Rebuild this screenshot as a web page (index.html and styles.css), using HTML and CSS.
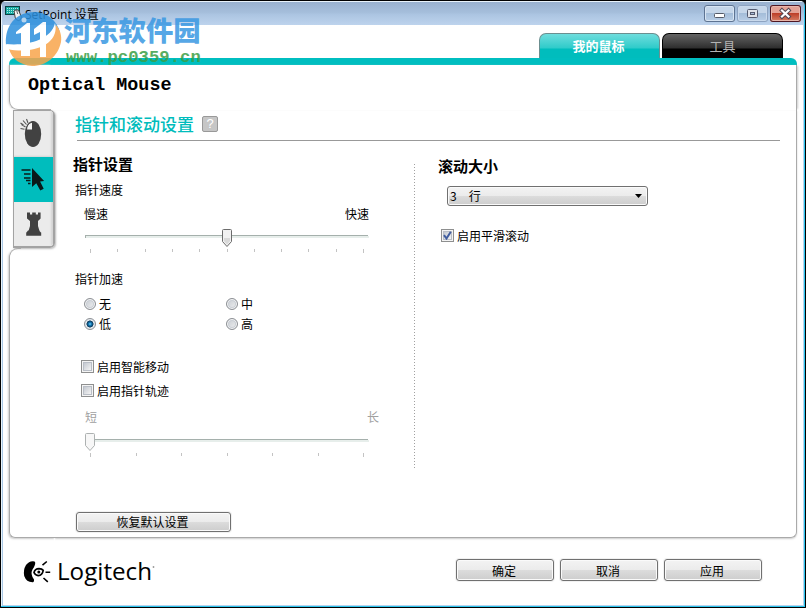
FILE: index.html
```html
<!DOCTYPE html>
<html lang="zh-CN">
<head>
<meta charset="utf-8">
<title>SetPoint 设置</title>
<link rel="stylesheet" href="styles.css">
</head>
<body>
<div class="window">
  <header class="titlebar">
    <svg class="app-icon" width="18" height="17" viewBox="0 0 18 17">
      <rect x="0.5" y="1.5" width="14" height="8" fill="#16aaa3" stroke="#0d3f42"/>
      <path d="M2 3.5h11M2 5.5h11M2 7.5h8" stroke="#a8f0e6" stroke-dasharray="1 1"/>
      <path d="M9 6q3-3 5 0l2.300 6q0 3-2.500 3.500q-2.800 0-3.500-2.500z" fill="#f2f2f2" stroke="#444"/>
      <path d="M11.500 5l1.200 4" stroke="#666"/>
    </svg>
    <span class="caption">SetPoint 设置</span>
    <div class="window-buttons">
      <span class="wbtn"><svg width="31" height="17" viewBox="0 0 31 17"><rect x="10.500" y="8.500" width="10" height="4" rx="1" fill="#fff" stroke="#555b68"/></svg></span>
      <span class="wbtn dim"><svg width="31" height="17" viewBox="0 0 31 17"><rect x="10.500" y="4.500" width="10" height="8" rx="1" fill="#dfe3ea" stroke="#555b70"/><rect x="13.500" y="7.500" width="4" height="2" fill="#a9bdd8" stroke="#555b70"/></svg></span>
      <span class="wbtn close"><svg width="31" height="17" viewBox="0 0 31 17"><path d="M12 5.500l6.500 6M18.500 5.500l-6.500 6" stroke="#524550" stroke-width="4.200" stroke-linecap="square"/><path d="M12 5.500l6.500 6M18.500 5.500l-6.500 6" stroke="#fff" stroke-width="2.200" stroke-linecap="square"/></svg></span>
    </div>
  </header>

  <nav class="tabs">
    <span class="tab active">我的鼠标</span>
    <span class="tab">工具</span>
  </nav>

  <main class="panel">
    <div class="accent"></div>
    <div class="device"><div class="device-edge"><h1>Optical Mouse</h1></div></div>
    <div class="panel-body">
      <aside class="rail">
        <div class="rail-tabs">
          <span class="rail-tab first"><svg width="40" height="46" viewBox="0 0 40 46">
            <ellipse cx="19" cy="23" rx="8.200" ry="13" fill="#424242"/>
            <path d="M12.500 19q0-6.500 6-8v8z" fill="#f4f4f4" stroke="#424242"/>
            <path d="M6.500 17.500l4 .8M7.500 13.500l4 2.500M9 9.500l3.500 4M12.500 8l1.500 4M6.500 12l3 2" stroke="#555" stroke-width="1.100"/>
          </svg></span>
          <span class="rail-tab selected"><svg width="40" height="45" viewBox="0 0 40 45">
            <path d="M18 11v19l4.300-3.700 4 7.200 3.400-1.700-3.600-7.200 4-.6z" fill="#0a1a19"/>
            <path d="M7.500 13h9M10 17h6.500M10 21h6.500M12 23.500h4.500M14 26.500h2.500" stroke="#0a1a19" stroke-width="1.700"/>
          </svg></span>
          <span class="rail-tab last"><svg width="40" height="45" viewBox="0 0 40 45">
            <path d="M13 10.500h3v2h2.200v-2h3.600v2h2.200v-2h2.600v6l-2.600 2.500v5l1.500 5h-11l1.500-5v-5l-3-2.500z" fill="#424242"/>
            <path d="M14 28.500h11l2.200 2.300v3h-15v-3z" fill="#424242"/>
          </svg></span>
        </div>
        <div class="rail-rest"></div>
      </aside>

      <section class="content">
        <div class="heading"><h2>指针和滚动设置</h2><span class="help">?</span></div>
        <div class="columns">
          <div class="col pointer">
            <h3>指针设置</h3>
            <div class="label speed">指针速度</div>
            <div class="range-ends"><span>慢速</span><span>快速</span></div>
            <svg class="slider" width="284" height="30" viewBox="0 0 284 30">
              <path d="M0 10.500h283" stroke="#a5b0ac"/><path d="M1 12h283" stroke="#e7eeeb" stroke-width="2"/><path d="M.5 10v3" stroke="#a5b0ac"/>
              <path d="M5.500 24v4M278.500 24v4M32.500 24v3M60.500 24v3M87.500 24v3M114.500 24v3M142.500 24v3M169.500 24v3M196.500 24v3M223.500 24v3M251.500 24v3" stroke="#c3c3c3"/>
              <path d="M137.500 5.500q0-1 1-1h7q1 0 1 1v11l-4.500 5-4.500-5z" fill="#f1f1f1" stroke="#6c6c6c"/><path d="M139 13h6v3l-3 3.500-3-3.500z" fill="#d9d9d9"/>
            </svg>
            <div class="label accel">指针加速</div>
            <div class="radios">
              <span class="opt"><i class="radio"></i>无</span><span class="opt"><i class="radio"></i>中</span>
              <span class="opt"><i class="radio on"></i>低</span><span class="opt"><i class="radio"></i>高</span>
            </div>
            <div class="checks">
              <span class="opt"><i class="check"></i>启用智能移动</span>
              <span class="opt"><i class="check"></i>启用指针轨迹</span>
            </div>
            <div class="range-ends trail"><span>短</span><span>长</span></div>
            <svg class="slider" width="284" height="30" viewBox="0 0 284 30">
              <path d="M5 12.500h278" stroke="#a5b0ac"/><path d="M5 14h279" stroke="#e7eeeb" stroke-width="2"/>
              <path d="M5.500 26v4M278.500 26v4M51.500 26v3M96.500 26v3M142.500 26v3M187.500 26v3M233.500 26v3" stroke="#c3c3c3"/>
              <path d="M.5 7.500q0-1 1-1h7q1 0 1 1v11l-4.500 5-4.500-5z" fill="#f7f7f7" stroke="#adb1b1"/>
            </svg>
            <button class="btn reset">恢复默认设置</button>
          </div>
          <div class="divider"></div>
          <div class="col scroll">
            <h3>滚动大小</h3>
            <div class="select"><span>3</span><span>行</span><svg width="7" height="4" viewBox="0 0 7 4"><path d="M0 0h7L3.500 4z" fill="#000"/></svg></div>
            <span class="opt"><i class="check on"><svg width="9" height="9" viewBox="0 0 9 9"><path d="M1 4.200l2.500 3.300L7.800.8" fill="none" stroke="#415d9f" stroke-width="2"/></svg></i>启用平滑滚动</span>
          </div>
        </div>
      </section>
    </div>
  </main>

  <footer class="footer">
    <svg class="logo" width="150" height="36" viewBox="0 0 150 36">
      <path d="M10 2.200Q6 2 3 6Q0 11 1.200 17Q3.500 23.500 10 23.200Q11.500 22.500 11 20.500Q7 15 9.500 10.500Q12.500 6 12.200 3.500Q12 2.300 10 2.200z" fill="#000"/>
      <path d="M11 13.500q1-3.700 5-3.800q3 .2 4.200 1.700q-.8 5-5 5.200q-3-.2-4.200-3.100z" fill="#fff" stroke="#000" stroke-width="1.700"/>
      <circle cx="15.800" cy="13" r="1.500" fill="#000"/>
      <path d="M19.500 6.200l4.300-3.700M22.500 13.300h4.700M20.500 19l4.300 3.800" stroke="#000" stroke-width="1.600"/>
      <text x="34" y="20.500" textLength="95" lengthAdjust="spacingAndGlyphs">Logitech</text>
      <circle cx="130.500" cy="8" r=".9" fill="#999"/>
    </svg>
    <div class="actions">
      <button class="btn">确定</button>
      <button class="btn">取消</button>
      <button class="btn">应用</button>
    </div>
  </footer>

  <div class="watermark">
    <svg width="58" height="56" viewBox="0 0 58 56">
      <path d="M1 34C-1 14 12 1 29 1C42 1 52 9 55 22C46 31 24 36 1 34z" fill="#2c8fdc"/>
      <path d="M4 38C24 40 45 33 51 14C55 18 57 25 56 31C53 45 42 55 27 55C15 54 7 48 4 38z" fill="#f8a54c"/>
      <path d="M1 33C20 35 46 30 50 12C54 27 40 39 18 39.500Q8 39.500 3 38z" fill="#fff"/>
      <path d="M11 21L22 12L25 12V38H16V22L11 23zM29 18L38 11L41 11V33H35V21L29 24z" fill="#fff"/>
      <path d="M16 36h9v9h-9zM35 31h6v15h-6z" fill="#fff"/>
      <circle cx="19" cy="9" r="2.500" fill="#b7d6ef"/>
    </svg>
    <div class="watermark-text">
      <span class="wm-name">河东软件园</span>
      <span class="wm-url">www.pc0359.cn</span>
    </div>
  </div>
</div>
</body>
</html>
```
FILE: styles.css
```css
* { box-sizing: border-box; }
body { margin: 0; background: #000; }
h1, h2, h3 { margin: 0; }
svg { display: block; flex: none; }

.window {
  position: relative;
  display: flex;
  flex-direction: column;
  width: 806px;
  height: 608px;
  overflow: hidden;
  background: #fff;
  border: 1px solid #000;
  border-radius: 6px 6px 0 0;
  box-shadow: inset -1px -1px 0 #29c4ec, inset 1px 0 0 #e8f4fb, inset 2px 0 0 #a9c7e4, inset -2px -2px 0 #b9d4ee;
  font: 12px/20px "Noto Sans CJK SC", sans-serif;
  color: #000;
}

.titlebar {
  display: flex;
  height: 24px;
  margin: 0 1px;
  padding: 3px 3px 0 3px;
  border-top: 1px solid #e8f2fa;
  background: linear-gradient(#99b1cf 0, #a6bfdc 11px, #abc4e1 12px, #bdd3ed 23px);
}
.caption { margin-left: 2px; line-height: 19px; font-family: "Open Sans", "Noto Sans CJK SC", sans-serif; }
.window-buttons { display: flex; gap: 2px; margin-left: auto; }
.wbtn {
  width: 31px;
  height: 17px;
  border-radius: 3px;
  background: linear-gradient(#c5d6e9 50%, #a4bdd9 50%, #bbd0e8);
  box-shadow: inset 0 0 0 1px #5d7392, inset 0 0 0 2px #d8e5f3;
}
.wbtn.dim { box-shadow: inset 0 0 0 1px #8da3c1, inset 0 0 0 2px #c9d9ec; }
.wbtn.close {
  background: linear-gradient(#e3a195 50%, #bd3f29 50%, #d9866c);
  box-shadow: inset 0 0 0 1px #4d1724, inset 0 0 0 2px #e9b5a9;
}

.tabs { display: flex; gap: 2px; height: 33px; padding: 8px 0 0 538px; }
.tab {
  width: 121px;
  height: 25px;
  border: 1px solid #000;
  border-bottom: 0;
  border-radius: 7px 7px 0 0;
  background: linear-gradient(#646464, #2e2e2e 14px, #000 15px);
  color: #b3b3b3;
  font-size: 13px;
  line-height: 24px;
  text-align: center;
}
.tab.active {
  padding-right: 2px;
  border-color: #6b8f90;
  background: linear-gradient(#6fdddd, #2fcbca 14px, #00bdbd 15px);
  color: #fff;
  font-weight: 700;
}

.panel {
  display: flex;
  flex-direction: column;
  height: 480px;
  margin: 0 8px;
}
.accent { height: 7px; background: #00bec0; border-radius: 6px 6px 0 0; }
.device { height: 45px; border-right: 1px solid #aaa; box-shadow: 2px 0 2px -1px #ccc; }
.device-edge {
  width: 42px;
  height: 45px;
  padding: 7px 0 0 18px;
  border: solid #aaa;
  border-width: 0 0 1px 1px;
  border-radius: 0 0 0 9px;
  box-shadow: -1px 0 2px #ddd;
}
h1 { font: 700 18.400px/27px "Liberation Mono", monospace; white-space: nowrap; }

.panel-body { display: flex; height: 428px; }
.rail { display: flex; flex-direction: column; width: 46px; }
.rail-tabs {
  width: 42px;
  height: 138px;
  margin-left: 4px;
  border: solid #a3a3a3;
  border-width: 1px 2px 2px 1px;
  border-radius: 0 5px 5px 0;
  overflow: hidden;
  box-shadow: 1px 1px 2px #bbb;
}
.rail-tab { display: block; height: 45px; background: #ebebeb; box-shadow: inset -2px -1px 2px #d4d4d4; }
.rail-tab.first { height: 46px; }
.rail-tab.selected { background: #00bdbd; box-shadow: none; }
.rail-tab.last { height: 46px; }
.rail-rest {
  flex: 1;
  border: solid #aaa;
  border-width: 1px 0 1px 1px;
  border-radius: 9px 0 0 6px;
  clip-path: polygon(-4px -4px, 12px -4px, 12px 50px, 46px 50px, 46px 300px, -4px 300px);
  box-shadow: -1px 1px 2px #ccc;
}

.content {
  flex: 1;
  padding: 0 16px 0 19px;
  border: solid #aaa;
  border-width: 0 1px 1px 0;
  border-radius: 0 0 6px 0;
  box-shadow: 0 1px 2px #ccc;
  clip-path: inset(0 -4px -4px 0);
}
.heading {
  display: flex;
  align-items: center;
  height: 31px;
  margin-left: 3px;
  border-bottom: 1px solid #999;
}
h2 { margin: -3px 0 0 -2px; font-size: 17px; font-weight: 500; line-height: 24px; color: #00bcbc; }
.help {
  width: 16px;
  height: 16px;
  margin: -2px 0 0 8px;
  border: 1px solid #999;
  border-radius: 2px;
  background: #c6c6c6;
  color: #fff;
  font: 13px/14px "Liberation Sans", sans-serif;
  text-align: center;
}
.columns { display: flex; }
.col { display: flex; flex-direction: column; align-items: flex-start; }
h3 { font-size: 15px; font-weight: 700; line-height: 20px; margin-left: -1px; }
.pointer { width: 340px; padding-top: 13px; }
.label { margin-left: 1px; }
.speed { margin-top: 6px; }
.range-ends { display: flex; justify-content: space-between; width: 285px; margin: 4px 0 0 10px; }
.slider { margin: 1px 0 0 11px; }
.accel { margin-top: 14px; }
.radios { display: grid; grid-template-columns: 142px 80px; margin: 5px 0 0 10px; }
.opt { display: flex; align-items: center; line-height: 20px; height: 20px; }
.radio {
  width: 12px;
  height: 12px;
  margin-right: 3px;
  border: 1px solid #8c8f94;
  border-radius: 50%;
  background: linear-gradient(135deg, #c4c9d0, #f2f2f2);
  box-shadow: inset 0 0 0 1px #f6f6f6, inset 0 0 0 2px #c9ced5;
}
.radio.on { background: radial-gradient(circle at 5px 5px, #74d5f8 0, #1678b4 1.500px, #0b3655 3.200px, #e3e8ed 3.800px); box-shadow: none; }
.checks { display: grid; row-gap: 4px; margin: 23px 0 0 7px; }
.check {
  width: 13px;
  height: 13px;
  margin: -1px 3px 0 0;
  padding: 1px;
  border: 1px solid #8e8f8f;
  background: linear-gradient(135deg, #c3c8d0, #f4f4f4) 2px 2px / 7px 7px no-repeat #f4f4f4;
  box-shadow: inset 0 0 0 1px #f4f4f4, inset 0 0 0 2px #b9bec6;
}
.trail { width: 294px; margin: 6px 0 0 11px; color: #a0a0a0; }
.trail + .slider { margin-top: 0; }
.btn {
  width: 98px;
  height: 22px;
  padding: 0 2px 0 0;
  border: 1px solid #707070;
  border-radius: 3px;
  background: linear-gradient(#f3f3f3, #ebebeb 50%, #dcdcdc 50%, #cdcdcd);
  box-shadow: inset 0 0 0 1px #fafafa, 0 0 0 1px #f1f1f1;
  font: inherit;
  line-height: 22px;
  color: #000;
}
.btn.reset { width: 155px; height: 20px; margin: 55px 0 0 2px; line-height: 18px; }
.divider { width: 1px; height: 306px; margin-top: 23px; background: repeating-linear-gradient(#a0a0a0 0 1px, #fff 1px 3px); }
.scroll { margin-left: 24px; padding-top: 15px; }
.scroll .select {
  display: flex;
  align-items: center;
  gap: 12px;
  width: 201px;
  height: 20px;
  margin: 10px 0 0 8px;
  padding: 0 5px 0 2px;
  border: 1px solid #707070;
  border-radius: 3px;
  background: linear-gradient(#f3f3f3, #ebebeb 50%, #dcdcdc 50%, #cdcdcd);
  box-shadow: inset 0 0 0 1px #fafafa;
}
.select svg { margin-left: auto; }
.scroll .opt { margin: 20px 0 0 2px; }

.footer { display: flex; justify-content: space-between; padding: 21px 43px 0 22px; }
.logo text { font: 24.500px "Open Sans", sans-serif; font-weight: 400; }
.actions { display: flex; gap: 6px; }

.watermark { position: absolute; left: 4px; top: 10px; display: flex; opacity: .85; }
.watermark-text { display: flex; flex-direction: column; margin-left: 1px; }
.wm-name { font: 900 27.300px/32px "Noto Sans CJK SC", sans-serif; color: #3998e2; margin-top: 2px; white-space: nowrap; }
.wm-url { font: 700 17.300px/20px "Liberation Mono", monospace; color: #3c9f46; margin: 3px 0 0 2px; white-space: nowrap; }
```
